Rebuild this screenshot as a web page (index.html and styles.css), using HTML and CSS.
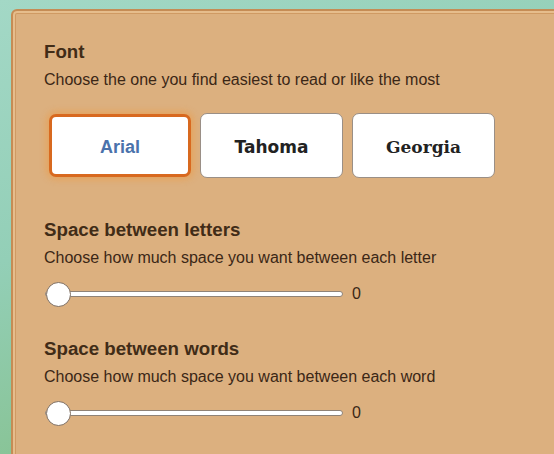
FILE: index.html
```html
<!DOCTYPE html>
<html lang="en">
<head>
    <meta charset="UTF-8">
    <meta name="viewport" content="width=device-width, initial-scale=1.0">
    <title>Reading settings</title>
    <link rel="stylesheet" href="styles.css">
</head>
<body>
    <div class="panel">
        <section class="group">
            <h2>Font</h2>
            <p>Choose the one you find easiest to read or like the most</p>
            <div class="fonts">
                <button class="font-btn arial selected">Arial</button>
                <button class="font-btn tahoma">Tahoma</button>
                <button class="font-btn georgia">Georgia</button>
            </div>
        </section>

        <section class="group">
            <h2>Space between letters</h2>
            <p>Choose how much space you want between each letter</p>
            <div class="slider-row">
                <input type="range" min="0" max="10" value="0">
                <span class="value">0</span>
            </div>
        </section>

        <section class="group">
            <h2>Space between words</h2>
            <p>Choose how much space you want between each word</p>
            <div class="slider-row">
                <input type="range" min="0" max="10" value="0">
                <span class="value">0</span>
            </div>
        </section>
    </div>
</body>
</html>
```

FILE: styles.css
```css
html, body {
    height: 100%;
}
body {
    margin: 0;
    overflow: hidden;
    font-family: "Liberation Sans", Arial, sans-serif;
    color: #3b2716;
    background: linear-gradient(160deg, #a3d8c6 0%, #93cfb7 40%, #7fb978 100%);
}
.panel {
    margin: 9px 0 0 11px;
    width: 600px;
    height: 520px;
    box-sizing: border-box;
    background: #dcb07f;
    border: 2px solid #c58c55;
    border-radius: 6px;
    box-shadow: inset 0 0 0 2px #e6bd8c, inset 0 0 0 3px #cf9a63;
    padding: 30px 0 0 31px;
}
.group {
    margin-bottom: 31px;
}
.group:first-child {
    margin-bottom: 41px;
}
h2 {
    margin: 0;
    font-size: 18.7px;
    font-weight: bold;
    line-height: 22px;
    color: #412c17;
}
p {
    margin: 7px 0 0;
    font-size: 16px;
    line-height: 20px;
}
.fonts {
    display: flex;
    align-items: flex-start;
    gap: 9px;
    margin-top: 23px;
    padding-left: 5px;
}
.font-btn {
    width: 143px;
    height: 65px;
    background: #fff;
    border: 1px solid #9a8f86;
    border-radius: 7px;
    font-size: 18px;
    font-weight: bold;
    color: #222;
    padding: 3px 0 0;
}
.font-btn.selected {
    border: 3px solid #d8691f;
    box-shadow: 0 0 6px 3px rgba(240, 150, 60, 0.45);
    width: 142px;
    height: 63px;
    margin-top: 1px;
}
.arial {
    font-family: "Liberation Sans", Arial, sans-serif;
    color: #4a72ab;
}
.tahoma {
    font-family: "DejaVu Sans", Tahoma, sans-serif;
    font-size: 17px;
}
.georgia {
    font-family: "DejaVu Serif", Georgia, serif;
    font-size: 17px;
}
.slider-row {
    display: flex;
    align-items: center;
    gap: 9px;
    margin-top: 13px;
    padding-left: 1px;
}
input[type="range"] {
    -webkit-appearance: none;
    appearance: none;
    width: 298px;
    height: 26px;
    margin: 0;
    background: transparent;
}
input[type="range"]::-webkit-slider-runnable-track {
    height: 6px;
    background: #fff;
    border: 1px solid #8f8276;
    border-radius: 4px;
    box-sizing: border-box;
}
input[type="range"]::-webkit-slider-thumb {
    -webkit-appearance: none;
    width: 25px;
    height: 25px;
    margin-top: -10.5px;
    background: #fff;
    border: 1px solid #7f6f62;
    border-radius: 50%;
}
.value {
    font-size: 16px;
}
```
